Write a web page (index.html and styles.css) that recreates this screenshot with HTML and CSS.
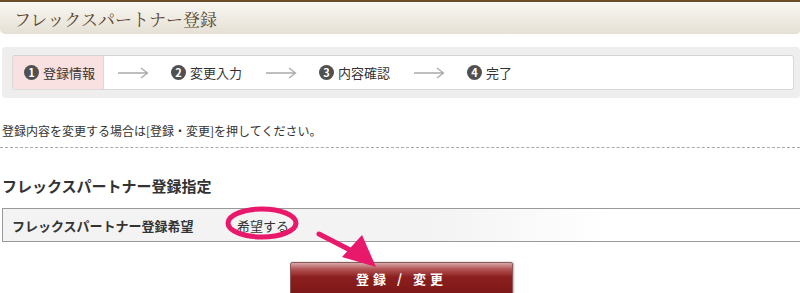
FILE: index.html
```html
<!DOCTYPE html>
<html lang="ja">
<head>
<meta charset="utf-8">
<title>フレックスパートナー登録</title>
<link rel="stylesheet" href="styles.css">
</head>
<body>
<div class="page">
  <div class="header"><h1>フレックスパートナー登録</h1></div>

  <div class="steps">
    <div class="steps-inner">
      <div class="step current"><span class="num">1</span>登録情報</div>
      <div class="arrow"><svg width="31" height="12" viewBox="0 0 31 12"><path d="M0 6H29M23 1L29.5 6L23 11" fill="none" stroke="#aaa" stroke-width="1.3"/></svg></div>
      <div class="step"><span class="num">2</span>変更入力</div>
      <div class="arrow"><svg width="31" height="12" viewBox="0 0 31 12"><path d="M0 6H29M23 1L29.5 6L23 11" fill="none" stroke="#aaa" stroke-width="1.3"/></svg></div>
      <div class="step"><span class="num">3</span>内容確認</div>
      <div class="arrow"><svg width="31" height="12" viewBox="0 0 31 12"><path d="M0 6H29M23 1L29.5 6L23 11" fill="none" stroke="#aaa" stroke-width="1.3"/></svg></div>
      <div class="step"><span class="num">4</span>完了</div>
    </div>
  </div>

  <p class="lead">登録内容を変更する場合は[登録・変更]を押してください。</p>
  <div class="dash"></div>

  <h2 class="sec-title">フレックスパートナー登録指定</h2>
  <div class="row">
    <div class="label">フレックスパートナー登録希望</div>
    <div class="value">希望する</div>
  </div>

  <div class="btn-wrap"><button class="btn">登録 / 変更</button></div>

  <svg class="annot" width="800" height="293" viewBox="0 0 800 293">
    <ellipse cx="262" cy="223" rx="34" ry="14" fill="none" stroke="#e8196b" stroke-width="5"/>
    <line x1="319" y1="234" x2="352" y2="251" stroke="#e8196b" stroke-width="5" stroke-linecap="round"/>
    <polygon points="376,267 342,257 362,235" fill="#e8196b"/>
  </svg>
</div>
</body>
</html>
```
FILE: styles.css
```css
* { box-sizing: border-box; }
html, body { margin: 0; padding: 0; background: #fff; }
body {
  font-family: "Noto Sans CJK JP", "Noto Sans", sans-serif;
  color: #333;
  width: 800px;
  height: 293px;
  overflow: hidden;
}
.page { position: relative; width: 800px; height: 293px; }

.header {
  border-top: 2px solid #6a4c28;
  height: 34px;
  background: linear-gradient(#f9f7f2, #e5e0d4);
  border-radius: 0 0 4px 5px;
  padding-left: 14px;
  display: flex;
  align-items: center;
}
.header h1 {
  margin: 0;
  font-family: "Noto Serif CJK JP", "Liberation Serif", serif;
  font-weight: normal;
  font-size: 17px;
  color: #5b4731;
  line-height: 1;
}

.steps {
  margin: 13px 0 0 2px;
  background: #eeeeee;
  border-radius: 4px;
  padding: 8px 6px 8px 10px;
}
.steps-inner {
  background: #fff;
  border: 1px solid #dadada;
  border-top-color: #d2d2d2;
  border-radius: 3px;
  height: 35px;
  display: flex;
  align-items: stretch;
  font-size: 13px;
  color: #333;
}
.step {
  display: flex;
  align-items: center;
  width: 81px;
  white-space: nowrap;
}
.step.current {
  background: #f9e1e1;
  width: 91px;
  padding-left: 11px;
  border-right: 1px solid #f1d0d0;
}
.step .num {
  width: 15px;
  height: 15px;
  border-radius: 50%;
  background: #505050;
  color: #fff;
  font-size: 11px;
  font-weight: bold;
  display: inline-flex;
  align-items: center;
  justify-content: center;
  margin-right: 4px;
  line-height: 1;
}
.arrow {
  display: flex;
  align-items: center;
  width: 67px;
  padding-left: 14px;
}
.arrow svg { display: block; }

.lead {
  margin: 24px 0 0 2px;
  font-size: 12px;
  line-height: 18px;
  color: #333;
}
.dash {
  margin-top: 7px;
  border-top: 1px dashed #aaaaaa;
}

.sec-title {
  margin: 28px 0 0 2px;
  font-size: 15px;
  line-height: 20px;
  font-weight: bold;
  color: #333;
}

.row {
  margin: 12px 0 0 2px;
  display: flex;
  height: 34px;
  border-top: 1px solid #999;
  border-bottom: 1px solid #999;
  border-left: 1px solid #999;
  box-shadow: inset 0 -1px 0 #dedede;
  font-size: 13px;
  align-items: stretch;
}
.row .label {
  width: 226px;
  background: #f3f3f3;
  font-weight: bold;
  padding-left: 9px;
  display: flex;
  align-items: center;
  color: #333;
}
.row .value {
  flex: 1;
  background: linear-gradient(90deg, #f3f3f3 0, #f3f3f3 200px, #ffffff 380px);
  display: flex;
  align-items: center;
  padding-left: 8px;
  color: #333;
}

.btn-wrap {
  margin-top: 20px;
  padding-left: 290px;
}
.btn {
  width: 223px;
  height: 36px;
  border: 1px solid #8a5a5a;
  border-radius: 2px;
  background: linear-gradient(#d9a8a8 0, #b35656 6px, #8c1f1f 14px, #7b1616 100%);
  color: #fff;
  font-family: "Noto Sans CJK JP", sans-serif;
  font-size: 13px;
  font-weight: bold;
  letter-spacing: 4px;
  padding: 0 0 4px 0;
  box-shadow: 1px 0 2px rgba(0,0,0,0.3);
}

.annot {
  position: absolute;
  left: 0;
  top: 0;
  pointer-events: none;
}
```
